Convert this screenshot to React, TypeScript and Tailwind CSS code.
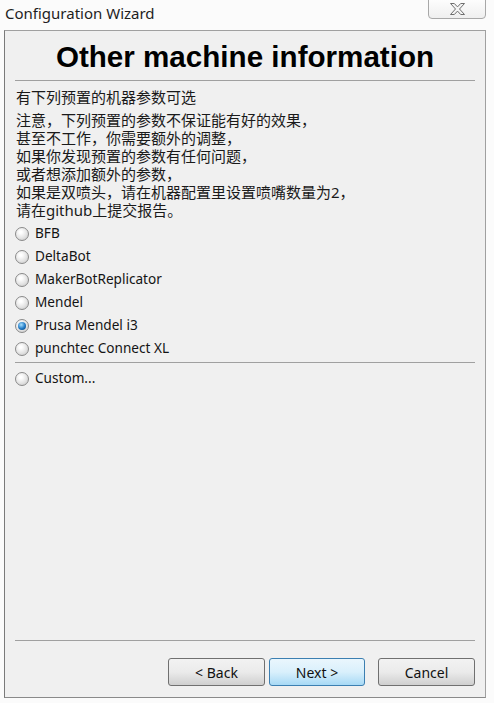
import React from 'react';

const presets = ['BFB', 'DeltaBot', 'MakerBotReplicator', 'Mendel', 'Prusa Mendel i3', 'punchtec Connect XL'];

const notes = [
  '注意，下列预置的参数不保证能有好的效果，',
  '甚至不工作，你需要额外的调整，',
  '如果你发现预置的参数有任何问题，',
  '或者想添加额外的参数，',
  '如果是双喷头，请在机器配置里设置喷嘴数量为2，',
  '请在github上提交报告。',
];

const Radio = ({ label, checked }: { label: string; checked?: boolean }) => (
  <div className="flex items-center h-[23px] pl-[10px]">
    <span className="w-[14px] h-[14px] rounded-full border border-[#8a8a8a] bg-[radial-gradient(circle_at_40%_35%,#ffffff_10%,#e4e4e4_55%,#c2c2c2)] flex items-center justify-center">
      {checked && (
        <span className="w-[8px] h-[8px] rounded-full bg-[radial-gradient(circle_at_40%_35%,#a6e0ff,#1f78c4_55%,#0a3a6a)]" />
      )}
    </span>
    <span className="ml-[6px] text-[13.6px] text-[#141414]">{label}</span>
  </div>
);

const Button = ({ label, focused }: { label: string; focused?: boolean }) => (
  <button
    className={`h-[28px] rounded-[3px] border text-[14px] text-[#111] ${
      focused
        ? 'border-[#3c7fb1] bg-gradient-to-b from-[#eaf6fd] via-[#d9f0fc] to-[#a7d9f5]'
        : 'border-[#707070] bg-gradient-to-b from-[#f2f2f2] via-[#ebebeb] to-[#cfcfcf]'
    }`}
  >
    {label}
  </button>
);

const App: React.FC = () => {
  return (
    <div
      className="w-[494px] h-[703px] bg-[#fbfbfb] flex flex-col overflow-hidden relative"
      style={{ fontFamily: '"Noto Sans", "Noto Sans CJK SC", sans-serif' }}
    >
      {/* Title bar */}
      <div className="h-[30px] flex items-start justify-between">
        <span className="ml-[5px] mt-[2px] text-[15px] text-[#1e1e1e]">Configuration Wizard</span>
        <div className="mr-[8px] mt-[-1px] w-[58px] h-[20px] border border-[#a8a8a8] rounded-b-[4px] bg-gradient-to-b from-[#fdfdfd] to-[#efefef] flex items-center justify-center">
          <svg width="17" height="14" viewBox="0 0 17 14">
            <path
              d="M1.5 1.5h3.8l3.2 3.4 3.2-3.4h3.8l-5 5.5 5 5.5h-3.8l-3.2-3.4-3.2 3.4h-3.8l5-5.5z"
              fill="#f4f4f4"
              stroke="#6e6e6e"
              strokeWidth="1"
              strokeLinejoin="round"
            />
          </svg>
        </div>
      </div>

      {/* Wizard panel */}
      <div className="ml-[4px] mr-[8px] mb-[5px] flex-1 bg-[#f0f0f0] border border-[#a0a0a0] border-l-[#7a7a7a] border-b-[#8a8a8a] flex flex-col">
        <h1
          className="h-[49px] pt-[6px] text-center text-[29.6px] font-bold text-black leading-[40px]"
          style={{ fontFamily: '"Liberation Sans", Arial, sans-serif' }}
        >
          Other machine information
        </h1>
        <div className="mx-[10px] h-px bg-[#a0a0a0]" />

        <div className="pl-[11px] pt-[7px] text-[15px] leading-[18px] text-[#1a1a1a]">
          <p>有下列预置的机器参数可选</p>
          <div className="mt-[5px]">
            {notes.map((n) => (
              <p key={n}>{n}</p>
            ))}
          </div>
        </div>

        <div className="mt-[3px]">
          {presets.map((p) => (
            <Radio key={p} label={p} checked={p === 'Prusa Mendel i3'} />
          ))}
        </div>
        <div className="mx-[10px] mt-[2px] mb-[4px] h-px bg-[#a0a0a0]" />
        <Radio label="Custom..." />

        <div className="flex-1" />
        <div className="mx-[10px] h-px bg-[#a0a0a0]" />
        <div className="flex justify-end pr-[10px] pt-[17px] pb-[11px]">
          <div className="grid grid-cols-[97px_96px] gap-[4px]">
            <Button label="< Back" />
            <Button label="Next >" focused />
          </div>
          <div className="ml-[13px] w-[97px] grid">
            <Button label="Cancel" />
          </div>
        </div>
      </div>
    </div>
  );
};

export default App;
